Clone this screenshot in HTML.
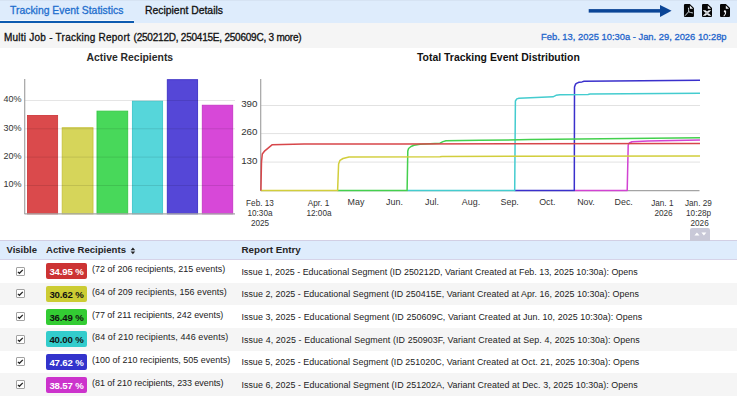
<!DOCTYPE html>
<html><head><meta charset="utf-8">
<style>
html,body{margin:0;padding:0;width:737px;height:400px;overflow:hidden;background:#fff;}
body{font-family:"Liberation Sans",sans-serif;color:#222;position:relative;}
.abs{position:absolute;white-space:pre;line-height:1;}
.med{-webkit-text-stroke:0.3px currentColor;}
#tabs{position:absolute;left:0;top:0;width:737px;height:23px;background:#DEECFC;border-top:1px solid #D6E3F3;box-sizing:border-box;}
#ul1{position:absolute;left:0;top:20px;width:134px;height:1px;background:#F4F8FD;}
#ul2{position:absolute;left:0;top:21px;width:134px;height:2px;background:#0E5BB0;}
#hdr{position:absolute;left:0;top:23px;width:737px;height:25.4px;background:#F5F5F5;}
#thead{position:absolute;left:0;top:240px;width:737px;height:20px;background:#DEECFC;border-top:1px solid #D2CFE4;border-bottom:1px solid #D6D3E8;box-sizing:border-box;}
.row{position:absolute;left:0;width:737px;height:23px;}
.odd{background:#fff}.even{background:#F5F5F5}
.cb{position:absolute;left:16.1px;width:6.8px;height:7.2px;border:1px solid #A2A2A2;border-radius:1px;background:#fff;}
.badge{position:absolute;left:46px;width:41px;height:16px;border-radius:2px;font-weight:700;font-size:9.6px;letter-spacing:-0.15px;text-align:center;line-height:17.6px;}
.cnt{font-size:8.96px;color:#222;}
.ent{font-size:8.9px;color:#222;}
</style></head><body>
<div id="tabs"></div>
<div id="ul1"></div><div id="ul2"></div>
<div class="abs med" style="left:10px;top:6px;font-size:10.4px;color:#1F6FCE;">Tracking Event Statistics</div>
<div class="abs med" style="left:145px;top:6px;font-size:10.4px;color:#111;">Recipient Details</div>

<svg style="position:absolute;left:0;top:0" width="737" height="23">
  <rect x="588.7" y="9.1" width="73" height="3.5" fill="#0B4596"/>
  <polygon points="660,5 671.6,10.85 660,16.9" fill="#0B4596"/>
  <defs>
    <path id="doc" d="M1.1,0 H5.9 L10,3.9 V11.9 Q10,13 8.9,13 H1.1 Q0,13 0,11.9 V1.1 Q0,0 1.1,0 Z"/>
  </defs>
  <g transform="translate(683.95,4)">
    <use href="#doc" fill="#060606"/>
    <path d="M5.9,1.5 L9.1,4.7 L5.9,4.7 Z" fill="#F4F7FB"/>
    <path d="M4.5,4.1 Q4.85,5.9 4.7,7.7 L1.3,11.5 M4.7,7.8 Q6.6,8.7 8.6,8.9" stroke="#D4DCE4" stroke-width="0.95" fill="none" stroke-linecap="round"/>
  </g>
  <g transform="translate(702,4)">
    <use href="#doc" fill="#060606"/>
    <path d="M5.8,1.5 L9,4.7 L5.8,4.7 Z" fill="#F4F7FB"/>
    <clipPath id="xc"><rect x="1" y="6.2" width="8.4" height="5.6"/></clipPath>
    <g clip-path="url(#xc)"><path d="M1.9,5.9 L8.3,12.1 M8.3,5.9 L1.9,12.1" stroke="#F2F5F9" stroke-width="2" stroke-linecap="square"/></g>
    <path d="M3.6,8 L4.4,8.8 M6.6,8 L5.8,8.8 M3.6,10 L4.4,9.2 M6.6,10 L5.8,9.2" stroke="#060606" stroke-width="0.45"/>
  </g>
  <g transform="translate(720,4)">
    <use href="#doc" fill="#060606"/>
    <path d="M5.8,1.5 L9,4.7 L5.8,4.7 Z" fill="#F4F7FB"/>
    <circle cx="4.9" cy="7.4" r="1.1" fill="#F2F4F8"/>
    <path d="M5.7,7.6 Q5.9,10 4,11.8" stroke="#F2F4F8" stroke-width="1.05" fill="none" stroke-linecap="round"/>
  </g>
</svg>

<div id="hdr"></div>
<div class="abs med" style="left:4px;top:32.7px;font-size:10px;color:#111;letter-spacing:0.24px;">Multi Job - Tracking Report</div>
<div class="abs med" style="left:133.6px;top:32.7px;font-size:10px;color:#111;letter-spacing:-0.225px;">(250212D, 250415E, 250609C, 3 more)</div>
<div class="abs med" style="left:541px;top:32px;font-size:9.4px;color:#1F66CC;">Feb. 13, 2025 10:30a - Jan. 29, 2026 10:28p</div>

<div class="abs" style="left:86.5px;top:53px;font-size:10.4px;font-weight:700;color:#2a2a2a;">Active Recipients</div>
<div class="abs" style="left:417px;top:53px;font-size:10.45px;font-weight:700;color:#111;">Total Tracking Event Distribution</div>

<svg style="position:absolute;left:0;top:0" width="240" height="225">
  <g fill-opacity="1">
    <rect x="27.50" y="115.48" width="30.10" height="98.37" fill="#DA4A4C" stroke="#CF3C3F" stroke-width="0.9"/>
    <rect x="62.20" y="127.72" width="30.80" height="86.13" fill="#D6D55A" stroke="#C7C43E" stroke-width="0.9"/>
    <rect x="97.00" y="111.13" width="30.70" height="102.72" fill="#48D85A" stroke="#36C846" stroke-width="0.9"/>
    <rect x="132.40" y="101.21" width="30.20" height="112.64" fill="#56D6DA" stroke="#3EC6CA" stroke-width="0.9"/>
    <rect x="167.30" y="79.68" width="30.30" height="134.17" fill="#5547D7" stroke="#3D31C6" stroke-width="0.9"/>
    <rect x="202.30" y="105.25" width="30.40" height="108.60" fill="#D748D8" stroke="#C636C6" stroke-width="0.9"/>
  </g>
  <g stroke="#000" stroke-opacity="0.1" stroke-width="1">
    <line x1="24" x2="235" y1="100.5" y2="100.5"/>
    <line x1="24" x2="235" y1="128.8" y2="128.8"/>
    <line x1="24" x2="235" y1="157.1" y2="157.1"/>
    <line x1="24" x2="235" y1="185.5" y2="185.5"/>
  </g>
  <line x1="24.7" x2="24.7" y1="79" y2="214" stroke="#A4A4A4" stroke-width="1.2"/>
  <line x1="24.5" x2="235" y1="213.8" y2="213.8" stroke="#A4A4A4" stroke-width="1.2"/>
  <g font-family="Liberation Sans" font-size="9" fill="#333" text-anchor="end">
    <text x="21.4" y="102.2">40%</text>
    <text x="21.4" y="130.5">30%</text>
    <text x="21.4" y="158.8">20%</text>
    <text x="21.4" y="187.2">10%</text>
  </g>
</svg>

<svg style="position:absolute;left:0;top:0" width="737" height="240">
  <g stroke="#E2E2E2" stroke-width="1">
    <line x1="261" x2="700" y1="105.5" y2="105.5"/>
    <line x1="261" x2="700" y1="133.6" y2="133.6"/>
    <line x1="261" x2="700" y1="162.1" y2="162.1"/>
  </g>
  <line x1="260.7" x2="260.7" y1="79" y2="191" stroke="#A4A4A4" stroke-width="1.2"/>
  <line x1="260.5" x2="699.5" y1="190.6" y2="190.6" stroke="#A4A4A4" stroke-width="1.2"/>
  <g font-family="Liberation Sans" font-size="9.8" fill="#333" text-anchor="end">
    <text x="257.5" y="107.1">390</text>
    <text x="257.5" y="135.3">260</text>
    <text x="257.5" y="163.8">130</text>
  </g>
  <g fill="none" stroke-width="1.5" stroke-linejoin="round">
    <path stroke="#D243D2" d="M574.3,190.6 L627.2,190.6 L628.2,145 L629.3,143 L632,141.7 L648,141 L700,139.9"/>
    <path stroke="#3A30CC" d="M514.7,190.6 L574.3,190.6 L574.5,87 L575.5,84.2 L577,83.1 L579,82.3 L582,81.9 L584,81.3 L700,80.3"/>
    <path stroke="#44CCCF" d="M407.1,190.6 L514.7,190.6 L515.4,101 L516.8,98.9 L519,98.2 L553,96.8 L556,95.3 L560,94.7 L588,94.5 L590,94 L700,93.3"/>
    <path stroke="#44D04E" d="M337.6,190.6 L407.1,190.6 L407.8,151 L408.6,148.5 L411,146.5 L414,145.3 L420,144.2 L440,143.2 L443,141.6 L446,140.7 L480,140.3 L530,139.6 L700,137.7"/>
    <path stroke="#D2CE3C" d="M260.9,190.6 L337.6,190.6 L338.6,164 L340,160.3 L343,158.5 L349,157.1 L440,156.7 L442,156.4 L700,156.1"/>
    <path stroke="#D7464A" d="M260.9,190.6 L261.5,162 L262.3,154 L264.8,150.8 L272,144.8 L304,144.1 L400,143.9 L700,143.6"/>
  </g>
  <g font-family="Liberation Sans" font-size="8.2" fill="#333" text-anchor="middle">
    <text x="260" y="205.6">Feb. 13</text>
    <text x="260" y="215.8">10:30a</text>
    <text x="260" y="225.6">2025</text>
    <text x="318.5" y="205.6">Apr. 1</text>
    <text x="319" y="215.8">12:00a</text>
    <text x="356" y="205.3" font-size="8.9">May</text>
    <text x="394.5" y="205.3" font-size="8.9">Jun.</text>
    <text x="432" y="205.3" font-size="8.9">Jul.</text>
    <text x="471" y="205.3" font-size="8.9">Aug.</text>
    <text x="509.7" y="205.3" font-size="8.9">Sep.</text>
    <text x="547.3" y="205.3" font-size="8.9">Oct.</text>
    <text x="586" y="205.3" font-size="8.9">Nov.</text>
    <text x="623.7" y="205.3" font-size="8.9">Dec.</text>
    <text x="662.3" y="205.6">Jan. 1</text>
    <text x="663.5" y="215.8">2026</text>
    <text x="698.4" y="205.6">Jan. 29</text>
    <text x="698.6" y="215.8">10:28p</text>
    <text x="699.6" y="225.6">2026</text>
  </g>
</svg>

<div class="row odd" style="top:260.00px;height:22.67px;"></div>
<div class="cb" style="top:266.50px;"></div>
<svg class="chk" style="position:absolute;left:16px;top:266.50px" width="9" height="9"><path d="M1.9,4.9 L3.4,6.3 L6.8,2.9" stroke="#222" stroke-width="1.25" fill="none"/></svg>
<div class="badge" style="top:263.20px;background:#CC3333;color:#fff;">34.95 %</div>
<div class="abs cnt" style="letter-spacing:0.009px;left:92px;top:265.20px;">(72 of 206 recipients, 215 events)</div>
<div class="abs ent" style="letter-spacing:0.007px;left:241.4px;top:267.60px;">Issue 1, 2025 - Educational Segment (ID 250212D, Variant Created at Feb. 13, 2025 10:30a): Opens</div>
<div class="row even" style="top:282.67px;height:22.67px;"></div>
<div class="cb" style="top:289.17px;"></div>
<svg class="chk" style="position:absolute;left:16px;top:289.17px" width="9" height="9"><path d="M1.9,4.9 L3.4,6.3 L6.8,2.9" stroke="#222" stroke-width="1.25" fill="none"/></svg>
<div class="badge" style="top:285.87px;background:#CCCC33;color:#111;">30.62 %</div>
<div class="abs cnt" style="letter-spacing:0.058px;left:92px;top:287.87px;">(64 of 209 recipients, 156 events)</div>
<div class="abs ent" style="letter-spacing:0.052px;left:241.4px;top:290.27px;">Issue 2, 2025 - Educational Segment (ID 250415E, Variant Created at Apr. 16, 2025 10:30a): Opens</div>
<div class="row odd" style="top:305.34px;height:22.67px;"></div>
<div class="cb" style="top:311.84px;"></div>
<svg class="chk" style="position:absolute;left:16px;top:311.84px" width="9" height="9"><path d="M1.9,4.9 L3.4,6.3 L6.8,2.9" stroke="#222" stroke-width="1.25" fill="none"/></svg>
<div class="badge" style="top:308.54px;background:#33CC33;color:#111;">36.49 %</div>
<div class="abs cnt" style="letter-spacing:-0.027px;left:92px;top:310.54px;">(77 of 211 recipients, 242 events)</div>
<div class="abs ent" style="letter-spacing:0.067px;left:241.4px;top:312.94px;">Issue 3, 2025 - Educational Segment (ID 250609C, Variant Created at Jun. 10, 2025 10:30a): Opens</div>
<div class="row even" style="top:328.01px;height:22.67px;"></div>
<div class="cb" style="top:334.51px;"></div>
<svg class="chk" style="position:absolute;left:16px;top:334.51px" width="9" height="9"><path d="M1.9,4.9 L3.4,6.3 L6.8,2.9" stroke="#222" stroke-width="1.25" fill="none"/></svg>
<div class="badge" style="top:331.21px;background:#33CCCC;color:#111;">40.00 %</div>
<div class="abs cnt" style="letter-spacing:0.103px;left:92px;top:333.21px;">(84 of 210 recipients, 446 events)</div>
<div class="abs ent" style="letter-spacing:0.099px;left:241.4px;top:335.61px;">Issue 4, 2025 - Educational Segment (ID 250903F, Variant Created at Sep. 4, 2025 10:30a): Opens</div>
<div class="row odd" style="top:350.68px;height:22.67px;"></div>
<div class="cb" style="top:357.18px;"></div>
<svg class="chk" style="position:absolute;left:16px;top:357.18px" width="9" height="9"><path d="M1.9,4.9 L3.4,6.3 L6.8,2.9" stroke="#222" stroke-width="1.25" fill="none"/></svg>
<div class="badge" style="top:353.88px;background:#3333CC;color:#fff;">47.62 %</div>
<div class="abs cnt" style="letter-spacing:0.012px;left:92px;top:355.88px;">(100 of 210 recipients, 505 events)</div>
<div class="abs ent" style="letter-spacing:0.041px;left:241.4px;top:358.28px;">Issue 5, 2025 - Educational Segment (ID 251020C, Variant Created at Oct. 21, 2025 10:30a): Opens</div>
<div class="row even" style="top:373.35px;height:22.67px;"></div>
<div class="cb" style="top:379.85px;"></div>
<svg class="chk" style="position:absolute;left:16px;top:379.85px" width="9" height="9"><path d="M1.9,4.9 L3.4,6.3 L6.8,2.9" stroke="#222" stroke-width="1.25" fill="none"/></svg>
<div class="badge" style="top:376.55px;background:#CC33CC;color:#fff;">38.57 %</div>
<div class="abs cnt" style="letter-spacing:-0.041px;left:92px;top:378.55px;">(81 of 210 recipients, 233 events)</div>
<div class="abs ent" style="letter-spacing:0.061px;left:241.4px;top:380.95px;">Issue 6, 2025 - Educational Segment (ID 251202A, Variant Created at Dec. 3, 2025 10:30a): Opens</div>
<div id="thead"></div>
<div class="abs" style="left:6.5px;top:245.3px;font-size:9.5px;font-weight:700;color:#262626;">Visible</div>
<div class="abs" style="left:46px;top:245.3px;font-size:9.6px;font-weight:700;color:#262626;">Active Recipients</div>
<div class="abs" style="left:241.4px;top:245.3px;font-size:9.8px;font-weight:700;color:#262626;">Report Entry</div>

<svg style="position:absolute;left:130px;top:247px" width="7" height="8"><path d="M0.6,3.2 L2.9,0.4 L5.2,3.2 Z M0.6,4.4 L2.9,7.2 L5.2,4.4 Z" fill="#222"/></svg>
<div style="position:absolute;left:690px;top:227.5px;width:20px;height:13px;background:#C9C9D8;border-radius:2px 2px 0 0;"></div>
<svg style="position:absolute;left:690px;top:227.5px" width="20" height="13"><path d="M4.4,7.6 L6.95,4.6 L9.5,7.6 Z M11.4,4.6 L13.9,7.6 L16.4,4.6 Z" fill="#fff"/></svg>
</body></html>
